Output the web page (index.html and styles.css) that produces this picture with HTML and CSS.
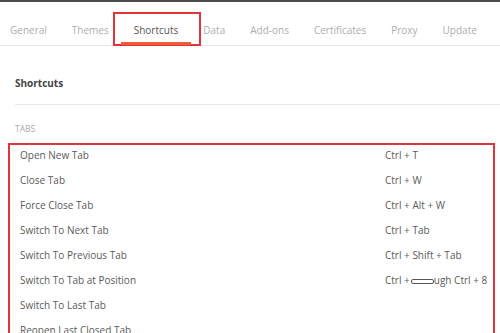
FILE: index.html
```html
<!DOCTYPE html>
<html lang="en">

<head>
    <meta charset="UTF-8">
    <meta name="viewport" content="width=device-width, initial-scale=1.0">
    <title>Settings</title>
    <link rel="stylesheet" href="styles.css">
</head>

<body>
    <div class="tabs">
        <div class="tab">General</div>
        <div class="tab">Themes</div>
        <div class="tab active">Shortcuts<span class="mark"></span></div>
        <div class="tab">Data</div>
        <div class="tab">Add-ons</div>
        <div class="tab">Certificates</div>
        <div class="tab">Proxy</div>
        <div class="tab">Update</div>
    </div>

    <div class="content">
        <div class="section-title">Shortcuts</div>
        <div class="group-label">TABS</div>

        <div class="shortcut-list">
            <div class="row"><span>Open New Tab</span><span>Ctrl + T</span></div>
            <div class="row"><span>Close Tab</span><span>Ctrl + W</span></div>
            <div class="row"><span>Force Close Tab</span><span>Ctrl + Alt + W</span></div>
            <div class="row"><span>Switch To Next Tab</span><span>Ctrl + Tab</span></div>
            <div class="row"><span>Switch To Previous Tab</span><span>Ctrl + Shift + Tab</span></div>
            <div class="row"><span>Switch To Tab at Position</span><span class="keys">Ctrl +<span class="blot"><i></i></span>ugh Ctrl + 8</span></div>
            <div class="row"><span>Switch To Last Tab</span><span></span></div>
            <div class="row"><span>Reopen Last Closed Tab</span><span></span></div>
        </div>
    </div>
</body>

</html>
```

FILE: styles.css
```css
body {
    margin: 0;
    width: 500px;
    overflow: hidden;
    border-top: 2px solid #4d4d4d;
    font-family: "Open Sans", "Noto Sans", sans-serif;
    font-size: 10px;
    color: #5a5a5a;
    background: #fff;
}

/* Вкладки */
.tabs {
    display: flex;
    height: 43px;
    border-bottom: 1px solid #e8e8e8;
    margin-left: -2.5px;
}

.tab {
    position: relative;
    padding: 21px 12.5px 0;
    line-height: 15px;
    color: #adadad;
    white-space: nowrap;
}

.tab.active {
    color: #555;
}

.tab.active::after {
    content: "";
    position: absolute;
    left: 0;
    right: 0;
    bottom: 0;
    height: 3px;
    background: #f15a3a;
}

/* красная рамка поверх активной вкладки */
.mark {
    position: absolute;
    left: -8px;
    right: -10px;
    top: 10px;
    bottom: -1px;
    border: 2px solid #e2333a;
}

/* Содержимое */
.content {
    padding-left: 15px;
}

.section-title {
    font-weight: bold;
    font-size: 10px;
    line-height: 16px;
    padding: 29px 0 13px;
    border-bottom: 1px solid #e8e8e8;
    color: #444;
}

.group-label {
    font-size: 8.5px;
    color: #aaa;
    line-height: 12px;
    padding-top: 18px;
    height: 20px;
}

.shortcut-list {
    margin-left: -7px;
    width: 483px;
    border: 2px solid #e2333a;
    border-bottom: none;
    padding-top: 2px;
}

.row {
    display: grid;
    grid-template-columns: 365px 1fr;
    padding-left: 10px;
    height: 25px;
    line-height: 17px;
    white-space: nowrap;
}

.keys {
    display: flex;
    align-items: center;
    height: 17px;
}

.blot {
    display: inline-block;
    width: 23px;
    height: 13px;
    margin-left: 1px;
    background: #fff;
    position: relative;
}

.blot i {
    position: absolute;
    left: 0;
    right: 0;
    top: 5px;
    height: 3px;
    border: 1px solid #555;
    border-radius: 2px;
}
```
